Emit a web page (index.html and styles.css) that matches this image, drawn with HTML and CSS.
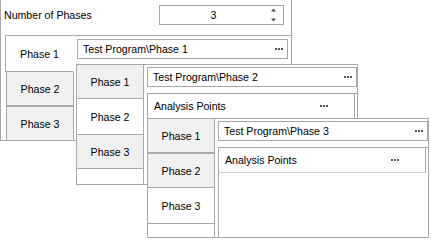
FILE: index.html
```html
<!DOCTYPE html>
<html lang="en">

<head>
    <meta charset="UTF-8">
    <meta name="viewport" content="width=device-width, initial-scale=1.0">
    <title>Phases</title>
    <link rel="stylesheet" href="styles.css">
</head>

<body>
    <div id="desk">
        <!-- outer editor: phase count + first tab page -->
        <section class="win win-1">
            <div class="count-row">
                <span class="label">Number of Phases</span>
                <div class="spin">
                    <span class="spin-val">3</span>
                    <svg class="spin-btn" width="7" height="16" viewBox="0 0 7 16">
                        <path d="M3.5 1.5 L6 4.5 L1 4.5 Z" fill="#505050" />
                        <path d="M1 11.5 L6 11.5 L3.5 14.5 Z" fill="#505050" />
                    </svg>
                </div>
            </div>
            <div class="tabs">
                <div class="strip">
                    <div class="tab on">Phase 1</div>
                    <div class="tab">Phase 2</div>
                    <div class="tab">Phase 3</div>
                </div>
                <div class="page">
                    <div class="field">
                        <span>Test Program\Phase 1</span>
                        <svg class="dots" width="8" height="2"><rect x="0" width="2" height="2" /><rect x="3" width="2" height="2" /><rect x="6" width="2" height="2" /></svg>
                    </div>
                </div>
            </div>
        </section>

        <!-- second phase window -->
        <section class="win win-2">
            <div class="tabs flush">
                <div class="strip">
                    <div class="tab">Phase 1</div>
                    <div class="tab on">Phase 2</div>
                    <div class="tab">Phase 3</div>
                </div>
                <div class="page">
                    <div class="field">
                        <span>Test Program\Phase 2</span>
                        <svg class="dots" width="8" height="2"><rect x="0" width="2" height="2" /><rect x="3" width="2" height="2" /><rect x="6" width="2" height="2" /></svg>
                    </div>
                    <div class="points">
                        <div class="points-head">
                            <span>Analysis Points</span>
                            <svg class="dots" width="8" height="2"><rect x="0" width="2" height="2" /><rect x="3" width="2" height="2" /><rect x="6" width="2" height="2" /></svg>
                        </div>
                        <div class="points-body"></div>
                    </div>
                </div>
            </div>
        </section>

        <!-- third phase window -->
        <section class="win win-3">
            <div class="tabs flush">
                <div class="strip">
                    <div class="tab">Phase 1</div>
                    <div class="tab">Phase 2</div>
                    <div class="tab on">Phase 3</div>
                </div>
                <div class="page">
                    <div class="field">
                        <span>Test Program\Phase 3</span>
                        <svg class="dots" width="8" height="2"><rect x="0" width="2" height="2" /><rect x="3" width="2" height="2" /><rect x="6" width="2" height="2" /></svg>
                    </div>
                    <div class="points">
                        <div class="points-head">
                            <span>Analysis Points</span>
                            <svg class="dots" width="8" height="2"><rect x="0" width="2" height="2" /><rect x="3" width="2" height="2" /><rect x="6" width="2" height="2" /></svg>
                        </div>
                        <div class="points-body"></div>
                    </div>
                </div>
            </div>
        </section>
    </div>
</body>

</html>
```

FILE: styles.css
```css
* {
    box-sizing: border-box;
    font-family: "Liberation Sans", Arial, sans-serif;
    font-size: 10.6px;
    color: #000;
}

body {
    margin: 0;
    background: #fff;
    overflow: hidden;
}

#desk {
    position: relative;
    width: 431px;
    height: 242px;
}

/* floating windows */
.win {
    position: absolute;
    background: #fff;
    border: 1px solid #a9a9a9;
    display: flex;
    flex-direction: column;
}

.win-1 {
    left: 0;
    top: -1px;
    width: 292px;
    height: 142px;
}

.win-2 {
    left: 76px;
    top: 64px;
    width: 282px;
    height: 121px;
}

.win-3 {
    left: 147px;
    top: 118px;
    width: 282px;
    height: 120px;
}

.count-row {
    display: flex;
    align-items: center;
    padding: 5px 7px 0 3px;
    height: 25px;
}

.label {
    flex: 1;
}

.spin {
    width: 125px;
    height: 20px;
    border: 1px solid #a9a9a9;
    display: flex;
    align-items: center;
}

.spin-val {
    flex: 1;
    text-align: center;
    padding-right: 3px;
}

.spin-btn {
    margin-right: 6px;
}

/* vertical tab control */
.tabs {
    display: flex;
    flex: 1;
    margin: 11px 0 0 4px;
}

.tabs.flush {
    margin: -1px 0 0 -1px;
}

.strip {
    width: 69px;
    display: flex;
    flex-direction: column;
    flex-shrink: 0;
}

.tab {
    height: 35px;
    width: 68px;
    margin-left: 1px;
    border: 1px solid #a9a9a9;
    background: #f0f0f0;
    display: flex;
    align-items: center;
    justify-content: center;
    flex-shrink: 0;
}

.tab.on {
    height: 37px;
    width: 69px;
    margin: -1px 0 -1px 0;
    background: #fff;
    border-right-color: #fff;
    position: relative;
}

.flush .tab {
    margin-left: 0;
}

.flush .tab.on {
    margin-left: 0;
    width: 68px;
    border-right-color: #a9a9a9;
}

.flush .tab:first-child {
    margin-top: 0;
}

.flush .strip {
    width: 68px;
    border-right: 1px solid #a9a9a9;
}

.page {
    flex: 1;
    margin-top: -1px;
    border-top: 1px solid #a9a9a9;
    padding: 3px 3px 0 3px;
    display: flex;
    flex-direction: column;
}

.flush .page {
    border-top: none;
    margin-top: 0;
    padding: 3px 0 0 3px;
}

.field {
    height: 20px;
    border: 1px solid #a9a9a9;
    display: flex;
    align-items: center;
    justify-content: space-between;
    padding: 0 4px 0 5px;
}

.dots {
    fill: #555;
}

.points {
    margin-top: 6px;
    flex: 1;
    display: flex;
    flex-direction: column;
    border-top: 1px solid #a9a9a9;
    border-left: 1px solid #a9a9a9;
}

.points-head {
    height: 25px;
    display: flex;
    align-items: center;
    justify-content: space-between;
    margin-right: 2px;
    padding: 0 26px 0 6px;
    border-right: 1px solid #a9a9a9;
    border-bottom: 1px solid #d0d0d0;
}

.points-body {
    flex: 1;
}
```
